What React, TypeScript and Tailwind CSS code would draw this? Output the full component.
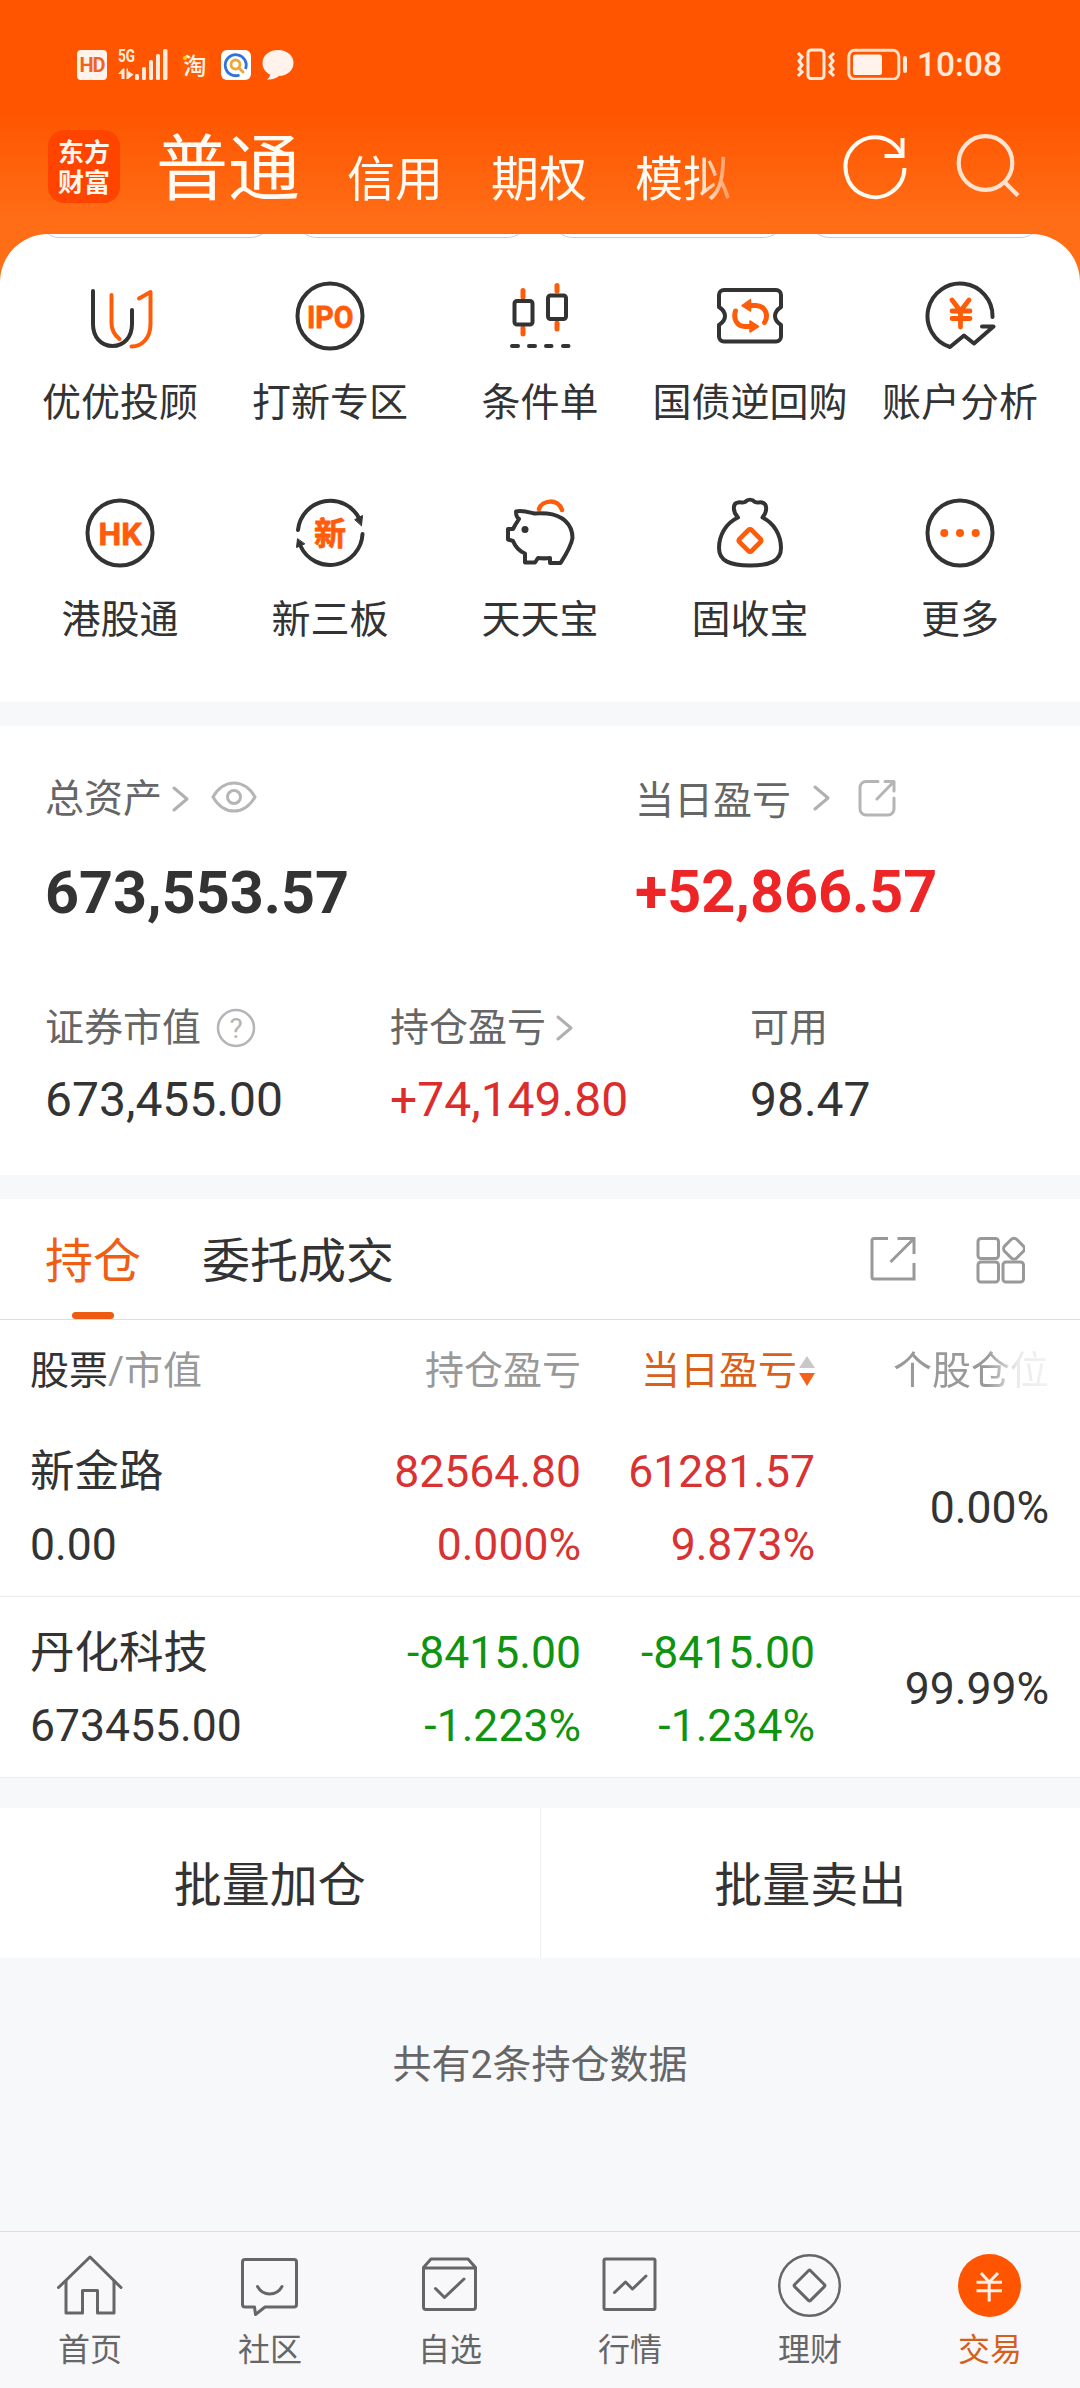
import type { ReactNode } from 'react';

const DARK = '#333333';
const ORANGE = '#ff5c0a';

function Icon({ children, stroke = DARK, width = 4 }: { children: ReactNode; stroke?: string; width?: number }) {
  return (
    <svg
      viewBox="0 0 72 72"
      className="block h-[72px] w-[72px] shrink-0"
      fill="none"
      stroke={stroke}
      strokeWidth={width}
      strokeLinecap="round"
      strokeLinejoin="round"
    >
      {children}
    </svg>
  );
}

function Chevron() {
  return (
    <svg viewBox="0 0 18 28" className="block h-7 w-[18px] shrink-0" fill="none" stroke="#b0b0b0" strokeWidth="3" strokeLinecap="round" strokeLinejoin="round">
      <path d="M3 3L16 14L3 25" />
    </svg>
  );
}

const shortcuts: { label: string; icon: ReactNode }[] = [
  {
    label: '优优投顾',
    icon: (
      <Icon>
        <path d="M9 11V44C9 57 17 66 28.5 66S48 57 48 44V30" />
        <g stroke={ORANGE}>
          <path d="M27.5 15V43c0 7 3 12 8 16" />
          <path d="M55 18.5L66.500 12V44C66.500 58 58 66.500 47.500 66.500" />
        </g>
      </Icon>
    ),
  },
  {
    label: '打新专区',
    icon: (
      <Icon>
        <circle cx="36" cy="36" r="32.500" />
        <text x="13" y="47.500" textLength="46.500" lengthAdjust="spacingAndGlyphs" fontSize="32" className="font-['Roboto'] font-bold" fill={ORANGE} stroke={ORANGE} strokeWidth="0.800">
          IPO
        </text>
      </Icon>
    ),
  },
  {
    label: '条件单',
    icon: (
      <Icon>
        <g stroke={ORANGE} strokeWidth="5">
          <path d="M19 10.500V17M19 48V54M53 5.500V11M53 43V49" />
        </g>
        <rect x="10.500" y="21" width="18" height="23.500" rx="2.500" />
        <rect x="44" y="15.500" width="18" height="23.500" rx="2.500" />
        <path d="M8 66H14M25 66H31M42 66H47.500M59 66H64.500" />
      </Icon>
    ),
  },
  {
    label: '国债逆回购',
    icon: (
      <Icon>
        <path d="M10 10H62a5 5 0 0 1 5 5V27c-3 2-6 5-6 9s3 7 6 9V56.500a5 5 0 0 1-5 5H10a5 5 0 0 1-5-5V45c3-2 6-5 6-9s-3-7-6-9V15a5 5 0 0 1 5-5Z" />
        <g stroke={ORANGE} strokeWidth="5">
          <path d="M34 25.500H42C49 25.500 52.500 31 52.500 36q0 4-2 6.500" />
          <path d="M21.500 31C19 39 23 46.500 31 46.500H38" />
        </g>
        <g fill={ORANGE} stroke={ORANGE} strokeWidth="1.500">
          <path d="M28 25.500L36.500 19.500V31Z" />
          <path d="M44.500 46.500L36 41V52Z" />
        </g>
      </Icon>
    ),
  },
  {
    label: '账户分析',
    icon: (
      <Icon>
        <path d="M68.500 37A32.500 32.500 0 1 0 26 67L40 55.500L50 63.500L69.500 46.500H58" />
        <path d="M28 20L36.500 31L45 20M36.500 31V47M28 31H46M28 38.500H46" stroke={ORANGE} strokeWidth="4.800" />
      </Icon>
    ),
  },
  {
    label: '港股通',
    icon: (
      <Icon>
        <circle cx="36" cy="36" r="32.500" />
        <text x="14.500" y="47.500" textLength="43" lengthAdjust="spacingAndGlyphs" fontSize="32" className="font-['Roboto'] font-bold" fill={ORANGE} stroke={ORANGE} strokeWidth="0.800">
          HK
        </text>
      </Icon>
    ),
  },
  {
    label: '新三板',
    icon: (
      <Icon>
        <path d="M4 33A32.500 32.500 0 0 1 65.500 22" />
        <path d="M68.500 37A32.500 32.500 0 0 1 6.500 49" />
        <g fill={DARK} strokeWidth="1">
          <path d="M61 22.500L68.500 18.500L67.500 28.500Z" />
          <path d="M3.500 42L2.500 50.500L10.500 47Z" />
        </g>
        <text x="20" y="47.500" fontSize="32" className="font-['Noto_Sans_CJK_SC'] font-bold" fill={ORANGE} stroke={ORANGE} strokeWidth="0.800">
          新
        </text>
      </Icon>
    ),
  },
  {
    label: '天天宝',
    icon: (
      <Icon>
        <path d="M35 12C38 3 54 1 58 13" stroke={ORANGE} strokeWidth="4.500" />
        <path d="M15 22C12 20 12 17 12 14.500C18 13 24 15 30 16.500C34 16 38 16 43 16.500C58 18 68.500 27 68.500 41C67 50 61 59 56.500 66H46V61C42 61.500 38 61.500 34 61L31 65.500H21V56.500C15 54 11 49 9 44L4 42.500V32H9C11 28 13 25 15 22Z" />
        <circle cx="21" cy="32.500" r="3.500" fill={DARK} stroke="none" />
      </Icon>
    ),
  },
  {
    label: '固收宝',
    icon: (
      <Icon>
        <path d="M24 20.500C18 14 19 6 24 5.500C27 5 28.500 6 31 5C34 2 38 2 41 5C43.500 6 45 5 48 5.500C54 7 53 15 48.500 20.500C60 26 67 38 67 51C67 64 56 68.500 36 68.500S5 64 5 51C5 38 12 26 24 20.500Z" />
        <rect x="27.500" y="35" width="17" height="17" rx="2" transform="rotate(45 36 43.500)" stroke={ORANGE} strokeWidth="4.800" />
      </Icon>
    ),
  },
  {
    label: '更多',
    icon: (
      <Icon>
        <circle cx="36" cy="36" r="32.500" />
        <g fill={ORANGE} stroke="none">
          <circle cx="20.300" cy="36" r="4" />
          <circle cx="36" cy="36" r="4" />
          <circle cx="51.700" cy="36" r="4" />
        </g>
      </Icon>
    ),
  },
];

const holdings = [
  { name: '新金路', value: '0.00', profit: '82564.80', profitPct: '0.000%', day: '61281.57', dayPct: '9.873%', share: '0.00%', up: true },
  { name: '丹化科技', value: '673455.00', profit: '-8415.00', profitPct: '-1.223%', day: '-8415.00', dayPct: '-1.234%', share: '99.99%', up: false },
];

const GRAY = '#666666';

const tabs: { label: string; icon: ReactNode; active?: boolean }[] = [
  {
    label: '首页',
    icon: (
      <Icon stroke={GRAY} width={3}>
        <path d="M4.500 38.500L36 8L67 38.500" />
        <path d="M12 32V64H28.500V41.500H43.500V64H60V32" />
      </Icon>
    ),
  },
  {
    label: '社区',
    icon: (
      <Icon stroke={GRAY} width={3}>
        <path d="M11 10.500H60a2.500 2.500 0 0 1 2.500 2.500V55.500a2.500 2.500 0 0 1-2.500 2.500H31L21.500 65.500L20.500 58H11a2.500 2.500 0 0 1-2.500-2.500V13a2.500 2.500 0 0 1 2.500-2.500Z" />
        <path d="M23.500 37.500C29 47.500 42.500 47.500 48 37.500" />
      </Icon>
    ),
  },
  {
    label: '自选',
    icon: (
      <Icon stroke={GRAY} width={3}>
        <path d="M9.500 18.500L17 10H54L61.500 18.500V58a2.500 2.500 0 0 1-2.500 2.500H12a2.500 2.500 0 0 1-2.500-2.500ZM9.500 19H61.500" />
        <path d="M21.500 39.500L30.500 48.500L50 30" />
      </Icon>
    ),
  },
  {
    label: '行情',
    icon: (
      <Icon stroke={GRAY} width={3}>
        <rect x="10" y="10" width="51" height="50.500" rx="1.500" />
        <path d="M20.500 43.500L31.500 33L38.500 40L52 27" />
      </Icon>
    ),
  },
  {
    label: '理财',
    icon: (
      <Icon stroke={GRAY} width={2.5}>
        <circle cx="35.500" cy="36.500" r="30.300" />
        <rect x="24.300" y="25.300" width="22.500" height="22.500" rx="1.500" transform="rotate(45 35.500 36.500)" strokeWidth="3" />
      </Icon>
    ),
  },
  {
    label: '交易',
    active: true,
    icon: (
      <Icon stroke="#fff0e5" width={3}>
        <circle cx="35.500" cy="36.500" r="31.500" fill="#ff5500" stroke="none" />
        <path d="M27 24L35.200 33L44 24M35.200 33V52.500M22.500 33.300H48M22.500 41.700H48" strokeLinecap="butt" />
      </Icon>
    ),
  },
];

function StatusBar() {
  return (
    <div className="flex h-[130px] items-start justify-between pr-[78px] pl-[77px] pt-[48px]">
      <div className="flex h-8 items-center">
        <div className="mt-px flex h-[30px] w-[30px] items-center justify-center rounded-[4px] bg-[#fff3ec] font-['Roboto'] text-[20px] leading-none font-bold tracking-[-1px] text-[#f0641e]">
          HD
        </div>
        <svg viewBox="0 0 50 32" className="ml-[11px] h-8 w-[50px] overflow-visible" fill="#ffeadb">
          <text x="0" y="14" fontSize="19" textLength="17" lengthAdjust="spacingAndGlyphs" className="font-['Roboto'] font-bold">
            5G
          </text>
          <path d="M0 26L5 20.500H6.500V31H3.500V26ZM8.500 20.500H10V23L15.500 26.500L10 31H8.500Z" />
          <rect x="17" y="26" width="4" height="6" rx="1.500" />
          <rect x="24" y="19" width="4" height="13" rx="1.500" />
          <rect x="31" y="12" width="4" height="20" rx="1.500" />
          <rect x="38" y="6" width="4" height="26" rx="1.500" />
          <rect x="45" y="1" width="4.500" height="31" rx="1.500" />
        </svg>
        <div className="relative mt-px ml-[12px] flex h-[30px] w-[30px] items-center justify-center rounded-[7px] bg-[#ff5c02] font-['Noto_Sans_CJK_SC'] text-[23px] leading-none font-medium text-[#fff3ec]">
          淘
          <span className="absolute top-[6px] left-[3px] h-1 w-1 rounded-full bg-[#ffd400]" />
        </div>
        <svg viewBox="0 0 30 30" className="mt-px ml-[11px] h-[30px] w-[30px]" fill="none">
          <rect width="30" height="30" rx="6" fill="#ffffff" />
          <path d="M18.500 25A10.500 10.500 0 1 1 24.500 19" stroke="#2f74d8" strokeWidth="2.800" />
          <circle cx="14.500" cy="14.500" r="4.500" stroke="#e8a93a" strokeWidth="2.800" />
          <path d="M18 18L22 22" stroke="#e8a93a" strokeWidth="3" strokeLinecap="round" />
        </svg>
        <svg viewBox="0 0 32 30" className="mt-px ml-[11px] h-[30px] w-8" fill="#fff3ec">
          <path d="M16 0C25 0 31.500 5.500 31.500 13S25 26 17 26C14 28.500 10 30 5 29.500C7 28 8 26.500 8 24.500C3.500 22.500 0.500 18 0.500 13C0.500 5.500 7 0 16 0Z" />
        </svg>
      </div>
      <div className="flex h-8 items-center">
        <svg viewBox="0 0 40 32" className="h-8 w-10" fill="none" stroke="#ffeadb" strokeWidth="3">
          <rect x="12" y="2" width="16" height="28.500" rx="3" />
          <path d="M2 5L6 9L3 13L6 17L3 21L6 24L2 28M38 5L34 9L37 13L34 17L37 21L34 24L38 28" />
        </svg>
        <svg viewBox="0 0 62 32" className="ml-[11px] h-8 w-[62px]" fill="none">
          <rect x="1.800" y="2.200" width="50" height="29" rx="6" stroke="#ffe0cb" strokeWidth="3" />
          <rect x="6" y="6.500" width="29" height="20.500" rx="2.500" fill="#fff3ec" />
          <rect x="56" y="8" width="4" height="17" rx="2" fill="#ffeadb" />
        </svg>
        <span className="mt-px ml-[8px] text-[33.5px] leading-8 font-medium text-[#ffeadb]">10:08</span>
      </div>
    </div>
  );
}

function Header() {
  return (
    <div className="flex h-[104px] items-start">
      <div className="ml-[48px] flex h-[73px] w-[72px] shrink-0 items-center justify-center rounded-[16px] bg-[#ff4400] pb-[2px] text-center font-['Noto_Sans_CJK_SC',sans-serif] text-[26px] leading-[30px] font-bold text-[#fff6ee]">
        东方
        <br />
        财富
      </div>
      <div className="ml-[36px] flex h-[90px] w-[588px] shrink-0 items-start gap-12 text-[48px] whitespace-nowrap text-[#fffaf2] [mask-image:linear-gradient(to_right,black_540px,transparent_592px)]">
        <span className="-mr-px text-[72px] leading-[80px]">普通</span>
        <span className="leading-[100px]">信用</span>
        <span className="leading-[100px]">期权</span>
        <span className="leading-[100px]">模拟</span>
      </div>
      <svg viewBox="0 0 72 72" className="ml-[95px] h-[72px] w-[72px] shrink-0" fill="none" stroke="#fffaf2" strokeWidth="4">
        <path d="M65.500 38A29.500 30 0 1 1 62.500 24" />
        <path d="M63.500 8V26H45.500" />
      </svg>
      <svg viewBox="0 0 72 72" className="ml-10 h-[72px] w-[72px] shrink-0" fill="none" stroke="#ffe3cf" strokeWidth="4.200">
        <circle cx="34.500" cy="33" r="26.800" />
        <path d="M53.500 52L67 65.500" />
      </svg>
    </div>
  );
}

function Shortcuts() {
  return (
    <div className="h-[468px] overflow-hidden rounded-t-[48px] bg-white">
      <div className="flex h-1 items-end justify-between overflow-hidden px-9">
        {[0, 1, 2, 3].map((i) => (
          <div key={i} className="h-12 w-[238px] shrink-0 rounded-[24px] border border-[#cccccc]" />
        ))}
      </div>
      <div className="grid grid-cols-5 px-[15px] pt-[42px]">
        {shortcuts.map((s) => (
          <div key={s.label} className="flex h-[217px] flex-col items-center">
            {s.icon}
            <span className="mt-[27px] text-[39px] leading-[48px] whitespace-nowrap text-[#333333]">{s.label}</span>
          </div>
        ))}
      </div>
    </div>
  );
}

function Assets() {
  return (
    <div className="h-[449px] bg-white pl-[45px] text-[39px] leading-[48px] text-[#666666]">
      <div className="flex pt-[49px]">
        <div className="w-[590px]">
          <div className="flex h-12 items-center">
            <span>总资产</span>
            <span className="ml-[9px]"><Chevron /></span>
            <svg viewBox="0 0 48 34" className="mb-1 ml-[21px] h-[34px] w-12" fill="none" stroke="#b5b5b5" strokeWidth="3">
              <path d="M3 17C8 8 16 3 24 3S40 8 45 17C40 26 32 31 24 31S8 26 3 17Z" />
              <circle cx="24" cy="17" r="6.500" />
            </svg>
          </div>
          <div className="mt-[34px] text-[59.3px] leading-[72px] font-bold text-[#333333]">673,553.57</div>
        </div>
        <div>
          <div className="flex h-12 items-center">
            <span className="mt-[3px]">当日盈亏</span>
            <span className="-mt-[2px] ml-[21px]"><Chevron /></span>
            <svg viewBox="0 0 38 38" className="-mt-[3px] ml-[28px] h-[38px] w-[38px]" fill="none" stroke="#b5b5b5" strokeWidth="3" strokeLinecap="round" strokeLinejoin="round">
              <path d="M20 2.500H8a6 6 0 0 0-6 6V30a6 6 0 0 0 6 6H30a6 6 0 0 0 6-6V19" />
              <path d="M27 2.500H36V12M36 2.500L19 20" />
            </svg>
          </div>
          <div className="mt-[33px] text-[59.3px] leading-[72px] font-bold text-[#ee2526]">+52,866.57</div>
        </div>
      </div>
      <div className="mt-[75px] flex">
        <div className="w-[345px]">
          <div className="flex items-center">
            <span>证券市值</span>
            <svg viewBox="0 0 40 40" className="ml-[15px] h-10 w-10">
              <circle cx="20" cy="20" r="18" fill="none" stroke="#b5b5b5" strokeWidth="2.500" />
              <text x="20" y="30" textAnchor="middle" fontSize="28" fill="#b5b5b5">?</text>
            </svg>
          </div>
          <div className="mt-[20px] text-[48px] leading-[56px] text-[#333333]">673,455.00</div>
        </div>
        <div className="w-[360px]">
          <div className="flex items-center">
            <span>持仓盈亏</span>
            <span className="ml-[9px]"><Chevron /></span>
          </div>
          <div className="mt-[20px] text-[48px] leading-[56px] text-[#dd2c2c]">+74,149.80</div>
        </div>
        <div>
          <div>可用</div>
          <div className="mt-[20px] text-[48px] leading-[56px] text-[#333333]">98.47</div>
        </div>
      </div>
    </div>
  );
}

function Holdings() {
  return (
    <div className="h-[579px] bg-white">
      <div className="flex h-[121px] border-b border-[#dddddd] pr-[53px] pl-[45px] text-[48px] leading-[60px]">
        <div className="flex flex-col items-center justify-between pt-[33px] text-[#ee5f14]">
          <span>持仓</span>
          <span className="h-[7px] w-[42px] shrink-0 rounded-full bg-[#ee5a10]" />
        </div>
        <span className="ml-[61px] pt-[33px] text-[#333333]">委托成交</span>
        <svg viewBox="0 0 48 48" className="mt-9 mr-[58px] ml-auto h-12 w-12" fill="none" stroke="#999999" strokeWidth="3">
          <path d="M19 3.500H5a2 2 0 0 0-2 2V42a2 2 0 0 0 2 2H45V28" />
          <path d="M28.500 3.500H45V19M45 3.500L21.500 27" />
        </svg>
        <svg viewBox="0 0 50 50" className="mt-9 mr-[2px] h-[50px] w-[50px]" fill="none" stroke="#999999" strokeWidth="3">
          <rect x="3" y="3.500" width="20.500" height="20" rx="3" />
          <rect x="3" y="27" width="20.500" height="20" rx="3" />
          <rect x="28" y="27" width="20.500" height="20" rx="3" />
          <rect x="30.500" y="5.200" width="17" height="17" rx="4" transform="rotate(45 39 13.700)" />
        </svg>
      </div>
      <div className="flex h-24 items-center pt-[5px] pl-[30px] text-[39px] leading-[48px] text-[#999999]">
        <div className="w-[251px]">
          <span className="text-[#333333]">股票</span>/市值
        </div>
        <div className="w-[300px] text-right">持仓盈亏</div>
        <div className="flex w-[234px] items-center justify-end">
          <span className="mr-[2px] text-[#d9601a]">当日盈亏</span>
          <svg viewBox="0 0 16 34" className="h-[34px] w-4">
            <path d="M8 2L16 14H0Z" fill="#c8c8c8" />
            <path d="M8 32L16 19H0Z" fill="#f4621a" />
          </svg>
        </div>
        <div className="ml-[78px] [mask-image:linear-gradient(to_right,black_60%,rgba(0,0,0,0.2)_80%,rgba(0,0,0,0.12)_100%)]">个股仓位</div>
      </div>
      {holdings.map((h) => (
        <div
          key={h.name}
          className="flex h-[181px] items-center border-b border-[#ececec] pt-[6px] pr-[31px] pl-[30px] text-[44.5px] leading-[73px] text-[#333333]"
        >
          <div className="w-[251px]">
            <div>{h.name}</div>
            <div>{h.value}</div>
          </div>
          <div className={h.up ? 'w-[300px] text-right text-[#d93232]' : 'w-[300px] text-right text-[#0f940f]'}>
            <div>{h.profit}</div>
            <div>{h.profitPct}</div>
          </div>
          <div className={h.up ? 'w-[234px] text-right text-[#d93232]' : 'w-[234px] text-right text-[#0f940f]'}>
            <div>{h.day}</div>
            <div>{h.dayPct}</div>
          </div>
          <div className="flex-1 pb-px text-right">{h.share}</div>
        </div>
      ))}
    </div>
  );
}

export default function App() {
  return (
    <div className="flex h-[2388px] w-[1080px] flex-col overflow-hidden bg-[#f7f8fa] font-['Roboto','Noto_Sans_CJK_SC',sans-serif]">
      <div className="bg-[linear-gradient(to_bottom,#ff5500_110px,#ff6e17_225px)]">
        <StatusBar />
        <Header />
        <Shortcuts />
      </div>
      <div className="h-6" />
      <Assets />
      <div className="h-6" />
      <Holdings />
      <div className="mt-[30px] flex h-[150px] bg-white text-[48px] text-[#333333]">
        <div className="flex flex-1 items-center justify-center border-r border-[#eeeeee] pt-[5px]">批量加仓</div>
        <div className="flex flex-1 items-center justify-center pt-[5px]">批量卖出</div>
      </div>
      <div className="mt-[83px] text-center text-[39px] leading-[48px] text-[#666666]">共有2条持仓数据</div>
      <div className="mt-auto grid h-[157px] grid-cols-6 border-t border-[#dfdfe1] bg-[#f8f8fb] pt-[17px]">
        {tabs.map((t) => (
          <div key={t.label} className="flex flex-col items-center">
            {t.icon}
            <span className={t.active ? 'mt-[9px] text-[32px] leading-10 text-[#d5601c]' : 'mt-[9px] text-[32px] leading-10 text-[#666666]'}>
              {t.label}
            </span>
          </div>
        ))}
      </div>
    </div>
  );
}
